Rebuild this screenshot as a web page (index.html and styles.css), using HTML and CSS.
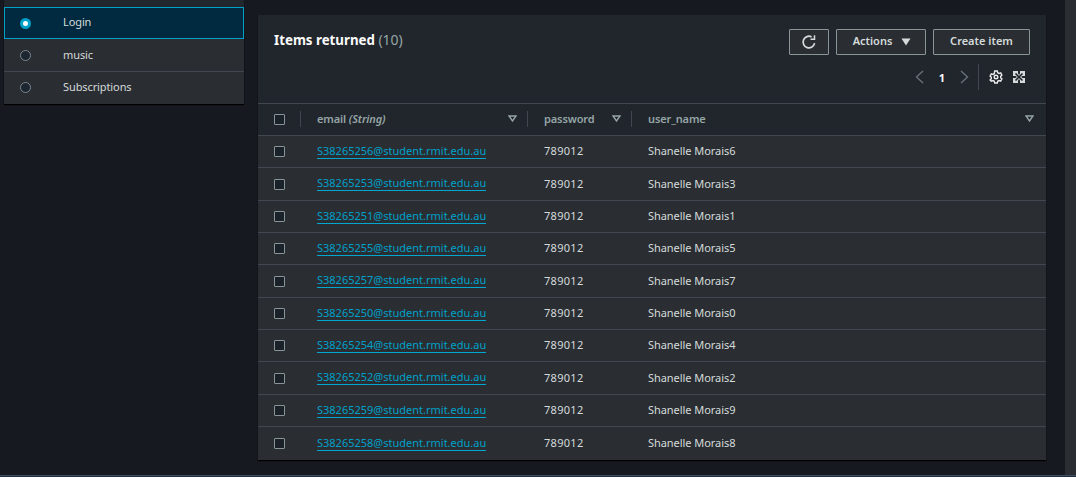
FILE: index.html
```html
<!DOCTYPE html>
<html lang="en">
<head>
<meta charset="utf-8">
<title>Items returned</title>
<link rel="stylesheet" href="styles.css">
</head>
<body>
<div class="page">
  <aside class="side">
    <div class="side-top"></div>
    <div class="opt selected"><span class="radio on"></span><span class="lbl up3">Login</span></div>
    <div class="opt"><span class="radio"></span><span class="lbl up2">music</span></div>
    <div class="opt last"><span class="radio"></span><span class="lbl up2">Subscriptions</span></div>
  </aside>
  <main class="panel">
    <header class="head">
      <h2 class="title">Items returned <span class="count">(10)</span></h2>
      <div class="tools">
        <div class="btns">
          <button class="btn icon-btn"><svg width="16" height="16" viewBox="0 0 16 16" fill="none" stroke="#d5dbdb" stroke-width="1.7"><path d="M13.600 9.200A5.800 5.800 0 1 1 10.600 2.900"/><path d="M13.500 1.200v4h-4" stroke-width="1.5"/></svg></button>
          <button class="btn actions"><span class="btn-text">Actions</span><svg width="10" height="8" viewBox="0 0 10 8"><path d="M0.500 0.500h9L5 7.500z" fill="#d5dbdb"/></svg></button>
          <button class="btn create"><span class="btn-text">Create item</span></button>
        </div>
        <div class="pager">
          <svg class="chev" width="9" height="14" viewBox="0 0 9 14" fill="none" stroke="#687078" stroke-width="1.4"><path d="M8 1 1.500 7 8 13"/></svg>
          <span class="pg">1</span>
          <svg class="chev" width="9" height="14" viewBox="0 0 9 14" fill="none" stroke="#687078" stroke-width="1.4"><path d="M1 1l6.500 6L1 13"/></svg>
          <span class="pipe"></span>
          <svg class="gear" width="14" height="14" viewBox="0 0 14 14" fill="none" stroke="#e8eaec" stroke-width="1.4"><path d="M5.700 1h2.600l.4 1.700 1.300.7 1.700-.5 1.200 2.200-1.200 1.200v1.400l1.200 1.200-1.200 2.200-1.700-.5-1.300.7-.4 1.700H5.700l-.4-1.700-1.300-.7-1.700.5L1.100 9.900l1.200-1.200V7.300L1.100 6.100l1.200-2.200 1.700.5 1.300-.7z"/><circle cx="7" cy="7" r="1.800"/></svg>
          <svg class="expand" width="12" height="12" viewBox="0 0 12 12"><path d="M0 0h12v12H0z" fill="#d5dbdb"/><path d="M2.500 2.500l7 7M9.500 2.500l-7 7" stroke="#21252c" stroke-width="1.600"/><path d="M5 0h2v2.500L6 4 5 2.500zM5 12h2V9.500L6 8 5 9.500zM0 5v2h2.500L4 6 2.500 5zM12 5v2H9.500L8 6l1.500-1z" fill="#21252c"/></svg>
        </div>
      </div>
    </header>
    <div class="grid thead">
      <div class="cell check"><span class="box"></span></div>
      <div class="cell th"><span>email <em>(String)</em></span><svg class="sort" width="9" height="7" viewBox="0 0 9 7" fill="none" stroke="#95a5a6" stroke-width="1.4"><path d="M1 1h7L4.500 6z"/></svg></div>
      <div class="cell th"><span>password</span><svg class="sort" width="9" height="7" viewBox="0 0 9 7" fill="none" stroke="#95a5a6" stroke-width="1.4"><path d="M1 1h7L4.500 6z"/></svg></div>
      <div class="cell th user"><span>user_name</span><svg class="sort" width="9" height="7" viewBox="0 0 9 7" fill="none" stroke="#95a5a6" stroke-width="1.4"><path d="M1 1h7L4.500 6z"/></svg></div>
    </div>
    <div class="rows">
      <div class="grid row"><div class="cell check"><span class="box"></span></div><div class="cell em"><a class="mail">S38265256@student.rmit.edu.au</a></div><div class="cell pw">789012</div><div class="cell name">Shanelle Morais6</div></div>
      <div class="grid row"><div class="cell check"><span class="box"></span></div><div class="cell em"><a class="mail">S38265253@student.rmit.edu.au</a></div><div class="cell pw">789012</div><div class="cell name">Shanelle Morais3</div></div>
      <div class="grid row"><div class="cell check"><span class="box"></span></div><div class="cell em"><a class="mail">S38265251@student.rmit.edu.au</a></div><div class="cell pw">789012</div><div class="cell name">Shanelle Morais1</div></div>
      <div class="grid row"><div class="cell check"><span class="box"></span></div><div class="cell em"><a class="mail">S38265255@student.rmit.edu.au</a></div><div class="cell pw">789012</div><div class="cell name">Shanelle Morais5</div></div>
      <div class="grid row"><div class="cell check"><span class="box"></span></div><div class="cell em"><a class="mail">S38265257@student.rmit.edu.au</a></div><div class="cell pw">789012</div><div class="cell name">Shanelle Morais7</div></div>
      <div class="grid row"><div class="cell check"><span class="box"></span></div><div class="cell em"><a class="mail">S38265250@student.rmit.edu.au</a></div><div class="cell pw">789012</div><div class="cell name">Shanelle Morais0</div></div>
      <div class="grid row"><div class="cell check"><span class="box"></span></div><div class="cell em"><a class="mail">S38265254@student.rmit.edu.au</a></div><div class="cell pw">789012</div><div class="cell name">Shanelle Morais4</div></div>
      <div class="grid row"><div class="cell check"><span class="box"></span></div><div class="cell em"><a class="mail">S38265252@student.rmit.edu.au</a></div><div class="cell pw">789012</div><div class="cell name">Shanelle Morais2</div></div>
      <div class="grid row"><div class="cell check"><span class="box"></span></div><div class="cell em"><a class="mail">S38265259@student.rmit.edu.au</a></div><div class="cell pw">789012</div><div class="cell name">Shanelle Morais9</div></div>
      <div class="grid row"><div class="cell check"><span class="box"></span></div><div class="cell em"><a class="mail">S38265258@student.rmit.edu.au</a></div><div class="cell pw">789012</div><div class="cell name">Shanelle Morais8</div></div>
    </div>
  </main>
  <div class="strip"></div>
</div>
<div class="foot"></div>
</body>
</html>
```
FILE: styles.css
```css
* { box-sizing: border-box; }
html, body { margin: 0; height: 100%; overflow: hidden; }
body {
  background: #16191f;
  color: #d5dbdb;
  font-family: "Noto Sans", sans-serif;
  font-size: 11px;
  display: flex;
  flex-direction: column;
}
.page { flex: 1; display: flex; min-height: 0; padding-left: 4px; }
.foot { height: 2px; background: #1f2f3f; border-top: 1px solid #414d5c; }
.side { width: 240px; height: 104px; background: #2a2e33; box-shadow: 0 1px 1px #000; flex: none; display: flex; flex-direction: column; }
.side-top { height: 7px; background: #22262d; }
.opt { height: 33px; display: flex; align-items: center; padding-left: 16px; gap: 32px; border-bottom: 1px solid #414750; }
.opt.last { border-bottom: 0; height: 32px; padding-bottom: 2px; }
.opt.selected { background: #012a40; border: 1px solid #00a1c9; padding-left: 15px; height: 32px; }
.lbl { letter-spacing: -0.1px; }
.up2 { padding-bottom: 2px; }
.up3 { padding-bottom: 3px; }
.radio { width: 11px; height: 11px; border-radius: 50%; border: 1px solid #7a8790; background: #1d2630; flex: none; }
.radio.on { background: #fff; border: 3.500px solid #00a1c9; }
.panel { width: 788px; margin: 15px 0 15px 14px; background: #2a2e33; box-shadow: 0 1px 1px #000; display: flex; flex-direction: column; flex: none; }
.head { height: 89px; background: #21252c; border-bottom: 1px solid #414750; padding: 14px 16px 0; display: flex; justify-content: space-between; }
.title { margin: 1px 0 0; font-size: 13.300px; line-height: 19px; font-weight: 700; color: #fafafa; }
.count { font-weight: 400; font-size: 14px; color: #95a5a6; }
.tools { display: flex; flex-direction: column; align-items: flex-end; }
.btns { display: flex; gap: 7px; }
.btn { height: 26px; background: #2a2e33; border: 1px solid #879596; color: #d5dbdb; font: 600 11px "Noto Sans", sans-serif; border-radius: 1px; display: flex; align-items: center; justify-content: center; padding: 0; }
.btn-text { padding-bottom: 3px; }
.icon-btn { width: 40px; }
.actions { width: 90px; gap: 9px; padding-left: 2px; }
.create { width: 97px; }
.pager { height: 28px; margin-top: 8px; display: flex; align-items: center; padding-right: 5px; }
.pg { width: 36px; text-align: center; font-weight: 700; color: #fafafa; font-size: 11px; }
.pipe { width: 1px; height: 26px; background: #414750; margin: 0 10px 0 9px; }
.chev { flex: none; }
.gear { margin-right: 10px; }
.grid { display: grid; grid-template-columns: 43px 227px 104px 1fr; }
.thead { height: 32px; background: #21252c; border-bottom: 1px solid #414750; flex: none; }
.cell { display: flex; align-items: center; padding-left: 16px; padding-bottom: 1px; }
.check { padding-left: 16px; position: relative; padding-bottom: 0; }
.row .check { padding-top: 0.6px; }
.em { padding-bottom: 0.4px; }
.pw { letter-spacing: 0.3px; padding-bottom: 1.400px; }
.name { letter-spacing: -0.05px; padding-bottom: 1.400px; }
.th { justify-content: space-between; font-weight: 600; color: #95a5a6; padding-right: 11px; position: relative; padding-bottom: 2px; letter-spacing: -0.12px; }
.th em { font-style: italic; }
.th::before, .thead .check::after { content: ""; position: absolute; left: -1px; top: 7px; width: 1px; height: 16px; background: #414750; }
.thead .check::after { left: auto; right: 0; }
.th:nth-child(2)::before { display: none; }
.user { padding-right: 12px; }
.box { width: 11px; height: 11px; border: 1px solid #879596; background: #1a2129; border-radius: 1px; }
.rows { flex: 1; display: flex; flex-direction: column; min-height: 0; }
.row { flex: none; height: 32.330px; border-bottom: 1px solid #414750; }
.row:last-child { border-bottom: 0; flex: 1; }
.mail { color: #00a1c9; border-bottom: 1px solid #00a8d0; line-height: 14px; }
.strip { position: absolute; top: 0; right: 0; width: 11px; bottom: 2px; background: #2a2e33; }
```
